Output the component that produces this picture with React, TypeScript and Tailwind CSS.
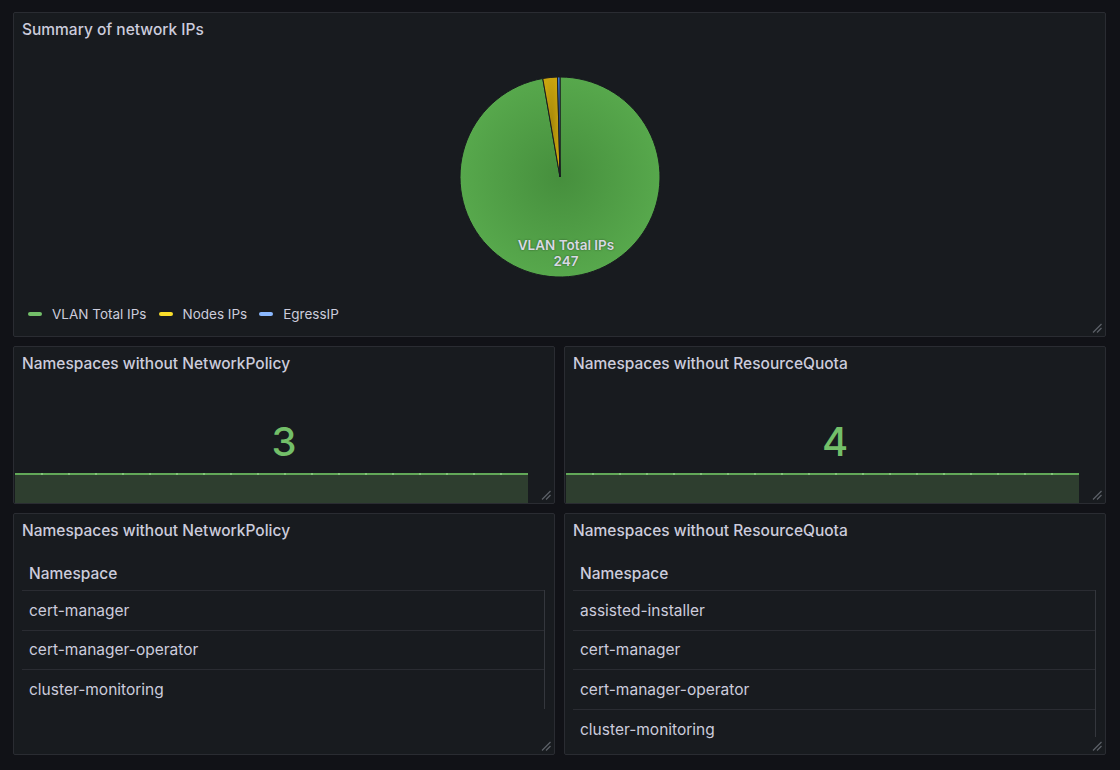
import React from 'react'

const font = { fontFamily: 'Inter, "Noto Sans", sans-serif' }

function ResizeHandle() {
  return (
    <svg
      className="absolute bottom-[3px] right-[3px]"
      width="10"
      height="10"
      viewBox="0 0 10 10"
    >
      <line x1="1" y1="9.5" x2="9.5" y2="1" stroke="#5d6068" strokeWidth="1.3" />
      <line x1="5" y1="9.5" x2="9.5" y2="5" stroke="#5d6068" strokeWidth="1.3" />
    </svg>
  )
}

function Panel({ title, className, children }: { title: string; className?: string; children?: React.ReactNode }) {
  return (
    <div
      className={`relative flex flex-col rounded-[2px] border border-[#2a2c32] bg-[#181b1f] overflow-hidden ${className ?? ''}`}
    >
      <div className="flex h-8 shrink-0 items-center px-2 pt-[2px] text-[15.5px] font-medium text-[#ccccdc]">{title}</div>
      {children}
      <ResizeHandle />
    </div>
  )
}

const slices = [
  { name: 'VLAN Total IPs', value: 247, color: 'url(#gGreen)', legend: '#73bf69' },
  { name: 'Nodes IPs', value: 6, color: 'url(#gYellow)', legend: '#fade2a' },
  { name: 'EgressIP', value: 1, color: 'url(#gBlue)', legend: '#8ab8ff' },
]

function Pie() {
  const cx = 110
  const cy = 110
  const r = 100
  const total = slices.reduce((s, x) => s + x.value, 0)
  let acc = 0
  const pt = (a: number) => {
    const rad = (a * Math.PI) / 180
    return [cx + r * Math.sin(rad), cy - r * Math.cos(rad)]
  }
  return (
    <svg width="220" height="220" viewBox="0 0 220 220">
      <defs>
        <radialGradient id="gGreen" cx="50%" cy="50%" r="50%">
          <stop offset="0%" stopColor="#468f3d" />
          <stop offset="100%" stopColor="#57a84c" />
        </radialGradient>
        <radialGradient id="gYellow" cx="50%" cy="50%" r="50%">
          <stop offset="0%" stopColor="#a3860a" />
          <stop offset="100%" stopColor="#c9a40e" />
        </radialGradient>
        <radialGradient id="gBlue" cx="50%" cy="50%" r="50%">
          <stop offset="0%" stopColor="#2d66c0" />
          <stop offset="100%" stopColor="#3d7ee0" />
        </radialGradient>
      </defs>
      {slices.map((s) => {
        const a0 = (acc / total) * 360
        acc += s.value
        const a1 = (acc / total) * 360
        const [x0, y0] = pt(a0)
        const [x1, y1] = pt(a1)
        const large = a1 - a0 > 180 ? 1 : 0
        return (
          <path
            key={s.name}
            d={`M${cx} ${cy} L${x0} ${y0} A${r} ${r} 0 ${large} 1 ${x1} ${y1} Z`}
            fill={s.color}
            stroke="#181b1f"
            strokeWidth="1"
          />
        )
      })}
      <g
        fill="#d8d9e3"
        fontSize="13.5"
        fontWeight="600"
        textAnchor="middle"
        style={{ ...font, textShadow: '0 0 2px rgba(0,0,0,0.5)' }}
      >
        <text x={cx + 6} y={cy + 73}>VLAN Total IPs</text>
        <text x={cx + 6} y={cy + 89}>247</text>
      </g>
    </svg>
  )
}

function Sparkline() {
  const w = 513
  const dots = []
  for (let x = 27; x < w; x += 27) dots.push(x)
  return (
    <svg width={w} height="30" viewBox={`0 0 ${w} 30`} className="ml-px block">
      <rect x="0" y="1" width={w} height="29" fill="#2e3e2f" />
      <line x1="0" y1="1" x2={w} y2="1" stroke="#62a858" strokeWidth="2" />
      {dots.map((x) => (
        <circle key={x} cx={x} cy="1" r="1" fill="#8fcf86" />
      ))}
    </svg>
  )
}

function StatPanel({ title, value }: { title: string; value: string }) {
  return (
    <Panel title={title} className="h-[158px]">
      <div className="mt-[43px] h-[40px] text-center text-[40px] font-medium leading-[40px] text-[#73bf69]">
        {value}
      </div>
      <div className="mt-[11px]">
        <Sparkline />
      </div>
    </Panel>
  )
}

function TablePanel({ title, rows }: { title: string; rows: string[] }) {
  const trackHeight = Math.min(rows.length * 39.7, 147)
  return (
    <Panel title={title} className="h-[242px]">
      <div className="mt-[9px] pl-2 pr-[9px]">
        <div className="flex h-[35px] items-center pl-[7px] pt-[2px] text-[15.5px] font-medium text-[#ccccdc]">
          Namespace
        </div>
        <div className="relative">
          {rows.map((r) => (
            <div
              key={r}
              className="flex h-[39.7px] items-center border-t border-[#2a2c32] pl-[7px] text-[15.5px] text-[#ccccdc]"
            >
              {r}
            </div>
          ))}
          <div className="absolute right-0 top-0 w-px bg-[#34373d]" style={{ height: trackHeight }} />
        </div>
      </div>
    </Panel>
  )
}

export default function App() {
  return (
    <div className="h-[770px] w-[1120px] bg-[#111217] pl-[13px] pt-[12px]" style={font}>
      <div className="flex w-[1093px] flex-col gap-[9px]">
        <Panel title="Summary of network IPs" className="h-[325px]">
          <div className="mt-[22px] flex justify-center">
            <Pie />
          </div>
          <div className="mt-[17px] flex items-center pl-[14px] text-[13.5px] text-[#ccccdc]">
            {slices.map((s) => (
              <div key={s.name} className="mr-3 flex items-center">
                <span className="mr-[10px] h-1 w-[14px] rounded-full" style={{ background: s.legend }} />
                {s.name}
              </div>
            ))}
          </div>
        </Panel>
        <div className="grid grid-cols-2 gap-[9px]">
          <StatPanel title="Namespaces without NetworkPolicy" value="3" />
          <StatPanel title="Namespaces without ResourceQuota" value="4" />
        </div>
        <div className="grid grid-cols-2 gap-[9px]">
          <TablePanel
            title="Namespaces without NetworkPolicy"
            rows={['cert-manager', 'cert-manager-operator', 'cluster-monitoring']}
          />
          <TablePanel
            title="Namespaces without ResourceQuota"
            rows={['assisted-installer', 'cert-manager', 'cert-manager-operator', 'cluster-monitoring']}
          />
        </div>
      </div>
    </div>
  )
}
